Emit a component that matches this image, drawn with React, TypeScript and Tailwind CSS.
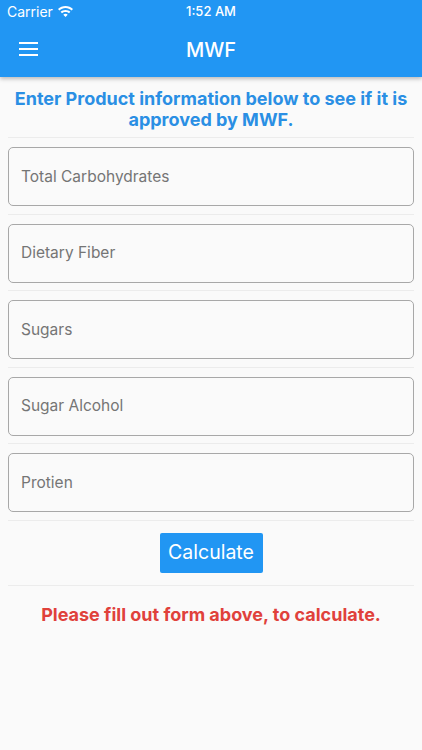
const fields = ["Total Carbohydrates", "Dietary Fiber", "Sugars", "Sugar Alcohol", "Protien"];

function WifiIcon() {
  return (
    <svg width="15" height="11" viewBox="0 0 15 11" fill="white">
      <path d="M7.5 0C4.6 0 2 1.1 0 2.9l1.4 1.5C3 2.9 5.2 2 7.5 2s4.5.9 6.1 2.4L15 2.9C13 1.1 10.4 0 7.5 0z" />
      <path d="M7.5 3.9c-1.9 0-3.6.7-4.9 1.9L4 7.3c.9-.9 2.1-1.4 3.5-1.4s2.6.5 3.5 1.4l1.4-1.5C11.1 4.6 9.4 3.9 7.5 3.9z" />
      <path d="M7.5 7.8c-.9 0-1.6.3-2.2.9L7.5 11l2.2-2.3c-.6-.6-1.3-.9-2.2-.9z" />
    </svg>
  );
}

export default function App() {
  return (
    <div className="min-h-[750px] w-[422px] bg-[#fafafa]" style={{ fontFamily: "Inter, Roboto, 'Liberation Sans', sans-serif" }}>
      {/* header */}
      <div className="relative z-10 bg-[#2196f3] shadow-[0_2px_4px_rgba(0,0,0,0.25)]">
        <div className="relative flex h-[23px] items-center px-[7px] text-[13px] text-white">
          <span className="text-[14px]">Carrier</span>
          <span className="ml-[5px]"><WifiIcon /></span>
          <span className="absolute left-1/2 -translate-x-1/2 font-medium">1:52 AM</span>
        </div>
        <div className="relative flex h-[54px] items-center px-[19px]">
          <svg width="19" height="14" viewBox="0 0 19 14" className="mb-[2px]">
            <rect x="0" y="0" width="19" height="2" fill="white" />
            <rect x="0" y="6" width="19" height="2" fill="white" />
            <rect x="0" y="12" width="19" height="2" fill="white" />
          </svg>
          <span className="absolute left-1/2 -translate-x-1/2 text-[20px] font-medium text-white">MWF</span>
        </div>
      </div>

      {/* intro */}
      <div className="mx-[8px] border-b border-[#ececec] pb-[7px] pt-[11px] text-center">
        <p className="text-[18px] font-bold leading-[21px] text-[#2a8fe4]">
          Enter Product information below to see if it is approved by MWF.
        </p>
      </div>

      {/* fields */}
      {fields.map((f) => (
        <div key={f} className="mx-[8px] border-b border-[#ececec] pb-[7.5px] pt-[9px]">
          <div className="flex h-[59px] items-center rounded-[5px] border border-[#a8a8a8] px-[12px] text-[15.5px] text-[#757575]">
            {f}
          </div>
        </div>
      ))}

      {/* button */}
      <div className="mx-[8px] flex justify-center border-b border-[#ececec] pb-[12px] pt-[12px]">
        <button className="h-[40px] w-[103px] rounded-[2px] bg-[#2196f3] text-[19.5px] text-white">Calculate</button>
      </div>

      <p className="pt-[15px] text-center text-[18px] font-bold text-[#e0413b]">
        Please fill out form above, to calculate.
      </p>
    </div>
  );
}
